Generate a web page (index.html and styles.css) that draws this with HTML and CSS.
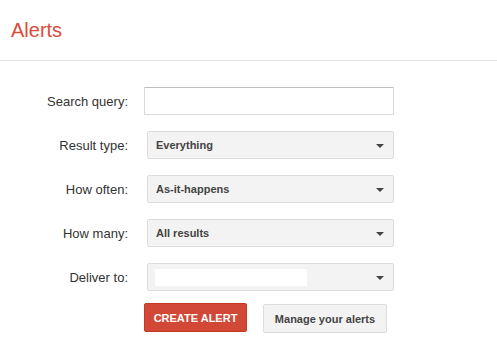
FILE: index.html
```html
<!DOCTYPE html>
<html>
<head>
    <title>Alerts</title>
    <link rel="stylesheet" href="styles.css">
</head>
<body>
    <div class="header">
        <h1>Alerts</h1>
    </div>

    <form class="alert-form">
        <label class="field-label" for="query">Search query:</label>
        <input class="text-input" type="text" id="query">

        <div class="field-label">Result type:</div>
        <div class="dropdown"><span>Everything</span><i class="arrow"></i></div>

        <div class="field-label">How often:</div>
        <div class="dropdown"><span>As-it-happens</span><i class="arrow"></i></div>

        <div class="field-label">How many:</div>
        <div class="dropdown"><span>All results</span><i class="arrow"></i></div>

        <div class="field-label">Deliver to:</div>
        <div class="dropdown"><span class="blank"></span><i class="arrow"></i></div>

        <div></div>
        <div class="actions">
            <button type="button" class="btn btn-red">CREATE ALERT</button>
            <button type="button" class="btn btn-grey">Manage your alerts</button>
        </div>
    </form>
</body>
</html>
```

FILE: styles.css
```css
body {
    margin: 0;
    font-family: "Liberation Sans", Arial, sans-serif;
    background: #fff;
    color: #222;
}

.header {
    height: 60px;
    border-bottom: 1px solid #e5e5e5;
    display: flex;
    align-items: center;
    padding-left: 11px;
}

.header h1 {
    margin: 0;
    margin-top: 1px;
    font-size: 20px;
    font-weight: 400;
    color: #dd4b39;
}

.alert-form {
    display: grid;
    grid-template-columns: 128px 250px;
    column-gap: 16px;
    row-gap: 16px;
    padding-top: 26px;
}

.field-label {
    text-align: right;
    font-size: 13px;
    color: #333;
    align-self: center;
}

.text-input {
    box-sizing: border-box;
    height: 28px;
    width: 250px;
    margin: 0;
    border: 1px solid #d9d9d9;
    border-top-color: #c0c0c0;
    border-radius: 1px;
    outline: none;
}

.dropdown {
    box-sizing: border-box;
    height: 28px;
    margin-left: 3px;
    width: 247px;
    background: #f3f3f3;
    border: 1px solid #dcdcdc;
    border-radius: 2px;
    display: flex;
    align-items: center;
    justify-content: space-between;
    padding: 0 9px 0 8px;
    font-size: 11px;
    font-weight: 700;
    color: #444;
}

.dropdown .blank {
    display: block;
    width: 152px;
    height: 17px;
    background: #fff;
    margin-left: -1px;
}

.arrow {
    width: 0;
    height: 0;
    border-left: 4px solid transparent;
    border-right: 4px solid transparent;
    border-top: 4px solid #444;
    margin-top: 1px;
}

.actions {
    display: flex;
    gap: 16px;
    margin-top: -4px;
}

.btn {
    box-sizing: border-box;
    height: 29px;
    font-family: "Liberation Sans", Arial, sans-serif;
    font-size: 11px;
    font-weight: 700;
    border-radius: 2px;
    padding: 0;
    white-space: nowrap;
}

.btn-red {
    width: 103px;
    background: #d14836;
    border: 1px solid #c53727;
    color: #fff;
}

.btn-grey {
    width: 124px;
    margin-top: 1px;
    background: #f3f3f3;
    border: 1px solid #dcdcdc;
    color: #444;
}
```
